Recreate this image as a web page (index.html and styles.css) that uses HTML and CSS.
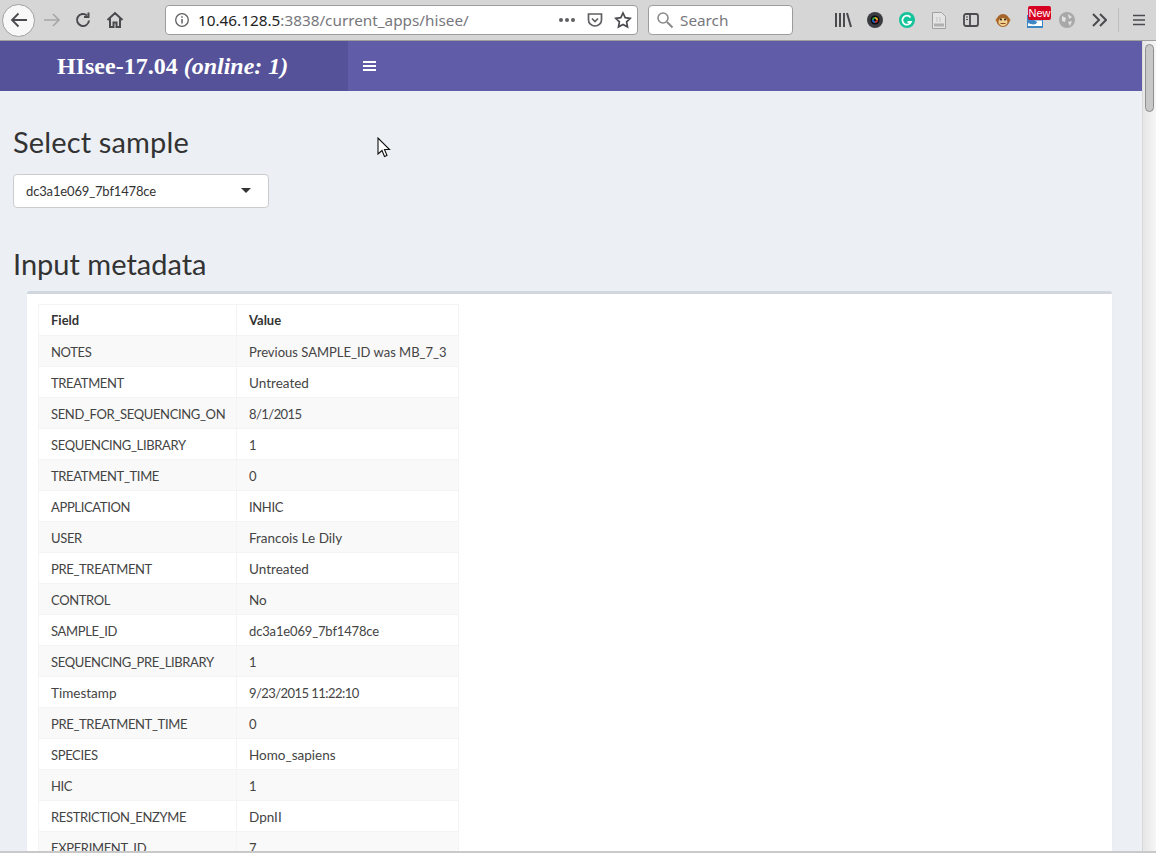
FILE: index.html
```html
<!DOCTYPE html>
<html lang="en">
<head>
    <meta charset="UTF-8">
    <title>HIsee</title>
    <link rel="stylesheet" href="styles.css">
</head>
<body>
    <div class="toolbar">
        <div class="nav-buttons">
            <span class="back-btn">
                <svg width="20" height="20" viewBox="0 0 20 20"><path d="M18 10H3.500M9.500 3.500L3 10l6.500 6.500" fill="none" stroke="#4a4a4f" stroke-width="1.800"/></svg>
            </span>
            <svg class="fwd" width="18" height="18" viewBox="0 0 18 18"><path d="M1 9h15M10 3l6 6-6 6" fill="none" stroke="#a6a6a6" stroke-width="1.600"/></svg>
            <svg class="reload" width="18" height="18" viewBox="0 0 18 18"><path d="M15 9.500a6 6 0 1 1-2-5M14.500 1.500v4.500h-4.500" fill="none" stroke="#4a4a4f" stroke-width="2"/></svg>
            <svg class="home" width="18" height="18" viewBox="0 0 18 18"><path d="M1.500 9L9 2l7.500 7M4 7.500V16h3.500v-4.500h3V16H14V7.500" fill="none" stroke="#4a4a4f" stroke-width="2"/></svg>
        </div>
        <div class="urlbar">
            <svg class="info" width="16" height="16" viewBox="0 0 16 16"><circle cx="8" cy="8" r="6.300" fill="none" stroke="#5f5f63" stroke-width="1.300"/><path d="M8 7v4.500M8 4.300v1.500" stroke="#5f5f63" stroke-width="1.500"/></svg>
            <span class="url"><b>10.46.128.5</b>:3838/current_apps/hisee/</span>
            <span class="dots"><i></i><i></i><i></i></span>
            <svg class="pocket" width="16" height="16" viewBox="0 0 16 16"><path d="M1.500 2h13v6a6.500 6 0 0 1-13 0z" fill="none" stroke="#5f5f63" stroke-width="1.700"/><path d="M5 6.500l3 3 3-3" fill="none" stroke="#5f5f63" stroke-width="1.700"/></svg>
            <svg class="star" width="18" height="18" viewBox="0 0 18 18"><path d="M9 2l2.200 4.600 5 .7-3.600 3.500.9 5L9 13.400l-4.500 2.400.9-5L1.800 7.300l5-.7z" fill="none" stroke="#4a4a4f" stroke-width="1.700"/></svg>
        </div>
        <div class="searchbar">
            <svg width="18" height="18" viewBox="0 0 18 18"><circle cx="7" cy="7" r="5" fill="none" stroke="#8a8a8a" stroke-width="1.600"/><path d="M11 11l5.500 5.500" stroke="#8a8a8a" stroke-width="2"/></svg>
            <span>Search</span>
        </div>
        <div class="addons">
            <svg class="library" width="18" height="16" viewBox="0 0 18 16"><path d="M2 1v14M6 1v14M10 1v14M13 1l4 14" stroke="#4a4a4f" stroke-width="2" fill="none"/></svg>
            <svg width="16" height="16" viewBox="0 0 16 16"><circle cx="8" cy="8" r="8" fill="#3b3d42"/><circle cx="8" cy="8" r="4.500" fill="#0b0b10"/><path d="M8 5a3 3 0 0 1 3 3H8z" fill="#e0b020"/><path d="M5 8a3 3 0 0 1 3-3v3z" fill="#2a9a50"/><path d="M8 11a3 3 0 0 1-3-3h3z" fill="#2060c0"/><path d="M11 8a3 3 0 0 1-3 3V8z" fill="#c03030"/><circle cx="8" cy="8" r="1.200" fill="#0b0b10"/></svg>
            <svg width="16" height="16" viewBox="0 0 16 16"><circle cx="8" cy="8" r="8" fill="#15c39a"/><path d="M11.500 5.500A4.500 4.500 0 1 0 12 10H8.500" fill="none" stroke="#fff" stroke-width="1.800"/></svg>
            <svg width="16" height="17" viewBox="0 0 16 17"><path d="M1.500 .5h9l4 4v12h-13z" fill="#e4e4e4" stroke="#a0a0a0"/><path d="M3 11.500h10v3H3z" fill="#b0b0b0"/><path d="M6 5v5M9 5v5" stroke="#c4c4c4"/></svg>
            <svg width="16" height="14" viewBox="0 0 16 14"><rect x="1" y="1" width="14" height="12" rx="2" fill="none" stroke="#4a4a4f" stroke-width="1.800"/><path d="M7 1v12" stroke="#4a4a4f" stroke-width="1.800"/><path d="M3 4h2M3 6.500h2" stroke="#4a4a4f"/></svg>
            <svg width="16" height="16" viewBox="0 0 16 16"><circle cx="2.500" cy="8" r="2" fill="#c98a3a"/><circle cx="13.500" cy="8" r="2" fill="#c98a3a"/><circle cx="8" cy="8.500" r="6.500" fill="#a5642a"/><ellipse cx="8" cy="10" rx="4.500" ry="4" fill="#f0cf90"/><circle cx="6" cy="7.500" r="1" fill="#222"/><circle cx="10" cy="7.500" r="1" fill="#222"/><path d="M5.500 11.500h5" stroke="#8a4a20"/></svg>
            <span class="new-addon">
                <svg width="16" height="16" viewBox="0 0 16 16"><path d="M0 3h16v13H0z" fill="#3f86c4"/><path d="M1 11c4 2 8 2 9-.5 0-1-1-1.500-3-2h8V14H1z" fill="#fff"/></svg>
                <span class="new-badge">New</span>
            </span>
            <svg width="16" height="16" viewBox="0 0 16 16"><circle cx="8" cy="8" r="8" fill="#a8a8a8"/><path d="M3 4l4 2-1 4-3-1zM9 2l4 3-3 2zM9 10l4-1-2 5z" fill="#e2e2e2"/></svg>
            <svg width="16" height="14" viewBox="0 0 16 14"><path d="M2 1l6 6-6 6M9 1l6 6-6 6" fill="none" stroke="#4a4a4f" stroke-width="2"/></svg>
        </div>
        <div class="menu-btn">
            <svg width="12" height="12" viewBox="0 0 12 12"><path d="M0 1.500h12M0 6h12M0 10.500h12" stroke="#4a4a4f" stroke-width="1.700"/></svg>
        </div>
    </div>

    <div class="viewport">
        <div class="page">
            <header class="app-header">
                <div class="logo"><b>HIsee-17.04</b> <b><i>(online: 1)</i></b></div>
                <div class="navbar">
                    <svg class="hamburger" width="13" height="12" viewBox="0 0 13 12"><path d="M0 2h13M0 6h13M0 10h13" stroke="#fff" stroke-width="2"/></svg>
                </div>
            </header>
            <main class="content">
                <h2 class="first">Select sample</h2>
                <div class="select-box">
                    <span>dc3a1e069_7bf1478ce</span>
                    <i class="caret"></i>
                </div>
                <h2>Input metadata</h2>
                <div class="box">
                    <table>
                        <thead>
                            <tr><th>Field</th><th>Value</th></tr>
                        </thead>
                        <tbody>
                            <tr><td class="caps">NOTES</td><td class="mixed">Previous SAMPLE_ID was MB_7_3</td></tr>
                            <tr><td class="caps">TREATMENT</td><td>Untreated</td></tr>
                            <tr><td class="caps">SEND_FOR_SEQUENCING_ON</td><td class="num">8/1/2015</td></tr>
                            <tr><td class="caps">SEQUENCING_LIBRARY</td><td class="num">1</td></tr>
                            <tr><td class="caps">TREATMENT_TIME</td><td class="num">0</td></tr>
                            <tr><td class="caps">APPLICATION</td><td class="caps">INHIC</td></tr>
                            <tr><td class="caps">USER</td><td>Francois Le Dily</td></tr>
                            <tr><td class="caps">PRE_TREATMENT</td><td>Untreated</td></tr>
                            <tr><td class="caps">CONTROL</td><td>No</td></tr>
                            <tr><td class="caps">SAMPLE_ID</td><td class="id">dc3a1e069_7bf1478ce</td></tr>
                            <tr><td class="caps">SEQUENCING_PRE_LIBRARY</td><td class="num">1</td></tr>
                            <tr><td>Timestamp</td><td class="num">9/23/2015 11:22:10</td></tr>
                            <tr><td class="caps">PRE_TREATMENT_TIME</td><td class="num">0</td></tr>
                            <tr><td class="caps">SPECIES</td><td>Homo_sapiens</td></tr>
                            <tr><td class="caps">HIC</td><td class="num">1</td></tr>
                            <tr><td class="caps">RESTRICTION_ENZYME</td><td>DpnII</td></tr>
                            <tr><td class="caps">EXPERIMENT_ID</td><td class="num">7</td></tr>
                        </tbody>
                    </table>
                </div>
            </main>
        </div>
        <div class="scrollbar"><div class="thumb"></div></div>
    </div>
    <div class="bottom-edge"></div>

    <svg class="cursor" width="14" height="22" viewBox="0 0 14 22"><path d="M1 1v16l4-3.500 2.500 6 2.500-1-2.500-6H12.500z" fill="#fff" stroke="#111" stroke-width="1.100"/></svg>
</body>
</html>
```

FILE: styles.css
```css
html, body {
    margin: 0;
    height: 853px;
    overflow: hidden;
}
body {
    position: relative;
    display: flex;
    flex-direction: column;
    font-family: Lato, "Noto Sans", sans-serif;
    background: #ecf0f5;
}

/* browser chrome */
.toolbar {
    height: 40px;
    flex: none;
    display: flex;
    align-items: center;
    background: #d6d6d6;
    border-bottom: 1px solid #9e9e9e;
    font-family: "Noto Sans", sans-serif;
}
.nav-buttons {
    width: 165px;
    display: flex;
    align-items: center;
    padding-left: 2px;
    box-sizing: border-box;
}
.back-btn {
    width: 33px;
    height: 33px;
    box-sizing: border-box;
    border: 1px solid #a0a0a0;
    border-radius: 50%;
    background: #f8f8f8;
    display: flex;
    align-items: center;
    justify-content: center;
}
.fwd { margin-left: 8px; }
.reload { margin-left: 13px; }
.home { margin-left: 14px; }
.urlbar {
    width: 473px;
    height: 30px;
    box-sizing: border-box;
    display: flex;
    align-items: center;
    background: #fff;
    border: 1px solid #9c9c9c;
    border-radius: 4px;
    padding: 0 5px 0 8px;
}
.url {
    margin-left: 8px;
    font-size: 15.3px;
    color: #77777c;
    flex: 1;
    white-space: nowrap;
}
.url b { font-weight: 400; color: #222; }
.dots { display: flex; gap: 2px; margin-right: 12px; }
.dots i {
    width: 4px;
    height: 4px;
    border-radius: 50%;
    background: #5f5f63;
}
.pocket { margin-right: 11px; }
.searchbar {
    width: 145px;
    height: 30px;
    margin-left: 10px;
    box-sizing: border-box;
    display: flex;
    align-items: center;
    gap: 6px;
    padding-left: 7px;
    background: #fff;
    border: 1px solid #9c9c9c;
    border-radius: 4px;
    font-size: 15.3px;
    color: #77777c;
}
.addons {
    display: flex;
    align-items: center;
    gap: 16px;
    margin-left: 41px;
}
.library { margin-right: -1px; }
.new-addon { position: relative; display: flex; }
.new-badge {
    position: absolute;
    left: 1px;
    top: -6px;
    width: 23px;
    height: 14px;
    background: #d70022;
    color: #fff;
    font-size: 11px;
    line-height: 14px;
    text-align: center;
    border-radius: 2px;
    font-family: "Liberation Sans", sans-serif;
}
.menu-btn {
    margin-left: 11px;
    height: 24px;
    padding-left: 14px;
    display: flex;
    align-items: center;
    border-left: 1px solid #bdbdbd;
}

/* page */
.viewport {
    flex: 1;
    display: flex;
    min-height: 0;
}
.page {
    flex: 1;
    min-width: 0;
    overflow: hidden;
}
.app-header {
    height: 50px;
    display: flex;
}
.logo {
    width: 348px;
    background: #555299;
    color: #fff;
    font-family: "Liberation Serif", serif;
    font-size: 24px;
    line-height: 50px;
    padding-left: 57px;
    box-sizing: border-box;
    white-space: nowrap;
}
.navbar {
    flex: 1;
    background: #605ca8;
    display: flex;
    align-items: center;
    padding-left: 15px;
}
.hamburger { margin-top: -1px; }
.content {
    padding: 0 30px 0 13px;
}
h2 {
    margin: 0;
    font-size: 29px;
    font-weight: 400;
    line-height: 32px;
    color: #333;
    padding-top: 40px;
    padding-bottom: 11px;
}
h2.first { padding-top: 35px; padding-bottom: 16px; letter-spacing: 0.15px; }
.select-box {
    width: 256px;
    height: 34px;
    box-sizing: border-box;
    display: flex;
    align-items: center;
    justify-content: space-between;
    padding: 0 17px 0 12px;
    background: #fff;
    border: 1px solid #ccc;
    border-radius: 4px;
    font-size: 13px;
    letter-spacing: -0.15px;
    color: #333;
}
.caret {
    width: 0;
    height: 0;
    border-left: 5px solid transparent;
    border-right: 5px solid transparent;
    border-top: 5px solid #333;
    margin-top: -2px;
}
.box {
    margin: 0 0 0 14px;
    width: 1085px;
    box-sizing: border-box;
    background: #fff;
    border-top: 3px solid #d2d6de;
    border-radius: 3px;
    padding: 10px 11px;
    box-shadow: 0 1px 1px rgba(0, 0, 0, 0.1);
}
table {
    border-collapse: collapse;
    table-layout: fixed;
    width: 421px;
    font-size: 13.5px;
    color: #444;
}
th, td {
    height: 31px;
    box-sizing: border-box;
    padding: 2px 12px 0;
    border: 1px solid #f4f4f4;
    text-align: left;
    white-space: nowrap;
}
th { color: #333; font-weight: 700; font-size: 13px; padding-top: 0; }
th:first-child { width: 198px; }
tbody tr:nth-child(odd) { background: #f9f9f9; }

/* Lato runs wider than the original font on capitals and digits */
td.caps { font-size: 13px; letter-spacing: -0.35px; }
td.mixed { font-size: 13px; }
td.num { font-size: 13px; letter-spacing: -0.55px; }
td.id { font-size: 13px; letter-spacing: -0.15px; }

/* scrollbar */
.scrollbar {
    width: 14px;
    flex: none;
    box-sizing: border-box;
    padding: 3px 2px 0 2px;
    background: linear-gradient(to right, #e6e6e6, #f6f6f6);
    border-left: 1px solid #d9d9d9;
}
.thumb {
    height: 68px;
    box-sizing: border-box;
    border: 1px solid #8f8f8f;
    border-radius: 5px;
    background: #c8c8c8;
}
.bottom-edge {
    height: 2px;
    flex: none;
    background: #c9c9c9;
}
.cursor {
    position: absolute;
    left: 377px;
    top: 137px;
}
```
